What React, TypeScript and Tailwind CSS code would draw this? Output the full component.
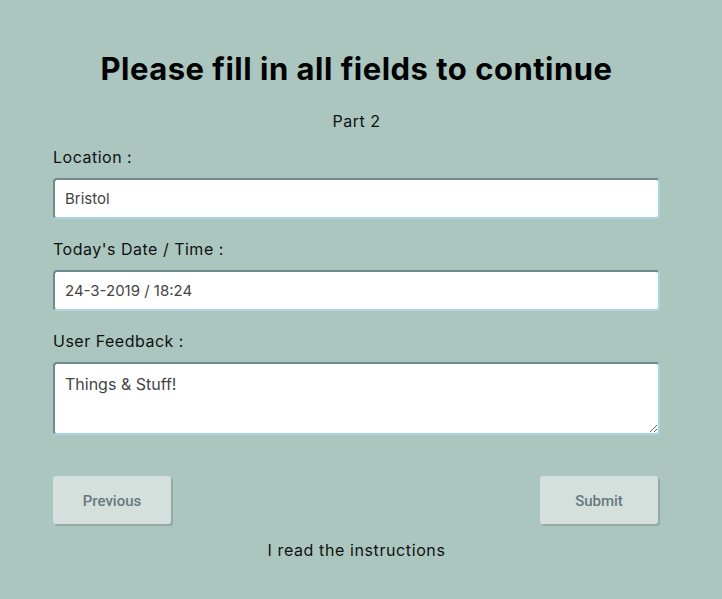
import React from "react";

const fieldCls =
  "block w-full h-[41px] rounded-[4px] bg-white border-2 border-t-[#6f8a90] border-l-[#6f8a90] border-b-[#a9d6e2] border-r-[#a9d6e2] px-[10px] text-[15px] text-[#444] outline-none";

const btnCls =
  "w-[118px] h-[48px] pt-[2px] rounded-[3px] bg-[#d5dfdc] shadow-[2px_2px_0_#97a8a4] text-[15px] font-medium text-[#66797f]";

export default function App() {
  return (
    <div
      className="min-h-[599px] w-full bg-[#aac6bf] text-[#111]"
      style={{ fontFamily: "Inter, 'Open Sans', sans-serif" }}
    >
      <div className="ml-[53px] w-[607px] pt-[49px] flex flex-col">
        <h1 className="text-center text-[31px] leading-[40px] font-bold tracking-[0.5px] text-black">
          Please fill in all fields to continue
        </h1>
        <div className="mt-[20px] text-center text-[16px] leading-[24px] tracking-[0.5px]">Part 2</div>

        <label className="mt-[12px] text-[16px] leading-[24px] tracking-[0.5px]">Location :</label>
        <input className={`${fieldCls} mt-[9px]`} value="Bristol" readOnly />

        <label className="mt-[18px] text-[16px] leading-[24px] tracking-[0.5px]">Today's Date / Time :</label>
        <input className={`${fieldCls} mt-[9px]`} value="24-3-2019 / 18:24" readOnly />

        <label className="mt-[18px] text-[16px] leading-[24px] tracking-[0.5px]">User Feedback :</label>
        <textarea
          className="mt-[9px] block w-full h-[73px] rounded-[4px] bg-white border-2 border-t-[#6f8a90] border-l-[#6f8a90] border-b-[#a9d6e2] border-r-[#a9d6e2] px-[10px] pt-[8px] text-[16px] text-[#444] outline-none"
          defaultValue="Things & Stuff!"
          readOnly
        />

        <div className="mt-[41px] flex justify-between pr-[2px]">
          <button className={btnCls} style={{ fontFamily: "Roboto, 'Open Sans', sans-serif" }}>
            Previous
          </button>
          <button className={btnCls} style={{ fontFamily: "Roboto, 'Open Sans', sans-serif" }}>
            Submit
          </button>
        </div>

        <div className="mt-[14px] text-center text-[16px] leading-[24px] tracking-[0.6px]">I read the instructions</div>
      </div>
    </div>
  );
}
